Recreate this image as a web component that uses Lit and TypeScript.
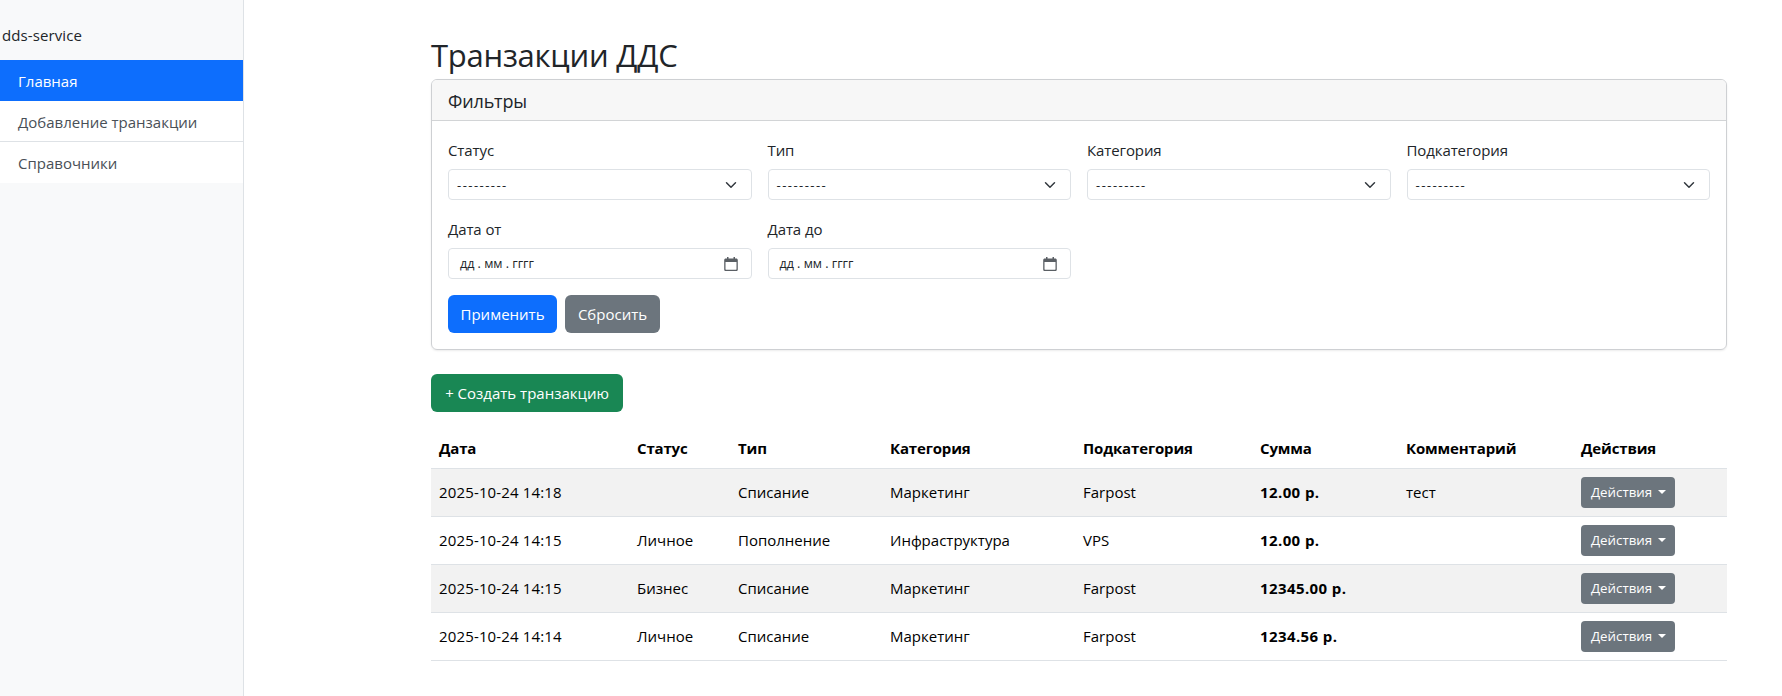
import { LitElement, css, html } from "lit";
import { customElement } from "lit/decorators.js";

const rows = [
  ["2025-10-24 14:18", "", "Списание", "Маркетинг", "Farpost", "12.00 р.", "тест"],
  ["2025-10-24 14:15", "Личное", "Пополнение", "Инфраструктура", "VPS", "12.00 р.", ""],
  ["2025-10-24 14:15", "Бизнес", "Списание", "Маркетинг", "Farpost", "12345.00 р.", ""],
  ["2025-10-24 14:14", "Личное", "Списание", "Маркетинг", "Farpost", "1234.56 р.", ""],
];

const chevron = html`<svg class="chev" viewBox="0 0 16 16" fill="none"><path d="M2 5l6 6 6-6" stroke="#343a40" stroke-width="2" stroke-linecap="round" stroke-linejoin="round"/></svg>`;
const calendar = html`<svg class="cal" viewBox="0 0 14 14"><path d="M3 0h1.5v1.5h5V0H11v1.5h1.2c.9 0 1.6.7 1.6 1.6v9.3c0 .9-.7 1.6-1.6 1.6H1.8C.9 14 .2 13.3.2 12.4V3.1c0-.9.7-1.6 1.6-1.6H3zM1.5 5v7.2c0 .3.2.5.5.5h10c.3 0 .5-.2.5-.5V5z" fill="#5a5f64"/></svg>`;

@customElement("app-root")
export class AppRoot extends LitElement {
  static styles = css`
    :host {
      display: grid;
      grid-template-columns: 244px 1fr;
      min-height: 100vh;
      font-family: "Open Sans", "Noto Sans", sans-serif;
      font-size: 15px;
      color: #212529;
      background: #fff;
    }
    * { box-sizing: border-box; }
    .side {
      background: #f8f9fa;
      border-right: 1px solid #dee2e6;
    }
    .brand {
      height: 60px;
      padding: 24px 0 0 2px;
      line-height: 22px;
      letter-spacing: 0.1px;
    }
    .nav-item {
      display: block;
      height: 41px;
      padding-left: 18px;
      line-height: 42px;
      background: #fff;
      color: #495057;
    }
    .nav-item.active { background: #0d6efd; color: #fff; }
    .nav-item.ruled { border-bottom: 1px solid #dee2e6; }

    main { padding: 32px 55px 0 187px; }
    h1 {
      margin: 0;
      height: 47px;
      font-size: 31px;
      line-height: 46px;
      font-weight: 400;
      letter-spacing: -0.25px;
    }
    .card {
      border: 1px solid #ced0d3;
      border-radius: 6px;
      box-shadow: 0 1px 2px rgba(0, 0, 0, 0.08);
      overflow: hidden;
    }
    .card-head {
      height: 41px;
      padding-left: 16px;
      background: #f7f7f7;
      border-bottom: 1px solid #d2d4d6;
      font-size: 18px;
      line-height: 43px;
      letter-spacing: -0.15px;
    }
    .card-body { padding: 16px; height: 228px; }
    .filters {
      display: grid;
      grid-template-columns: repeat(4, 1fr);
      gap: 16px;
    }
    label {
      display: block;
      height: 24px;
      margin-bottom: 8px;
      line-height: 26px;
      font-size: 15px;
      letter-spacing: -0.1px;
    }
    .control {
      display: flex;
      align-items: center;
      justify-content: space-between;
      height: 31px;
      border: 1px solid #dee2e6;
      border-radius: 4px;
      background: #fff;
      font-size: 13px;
    }
    .select { padding: 0 14px 0 8px; }
    .select span { letter-spacing: 1.45px; }
    .date { padding: 0 13px 0 11px; font-size: 12.5px; }
    .chev { width: 12px; height: 12px; }
    .cal { width: 14px; height: 14px; }
    .buttons { display: flex; gap: 8px; margin-top: 16px; }
    .btn {
      display: inline-flex;
      align-items: center;
      justify-content: center;
      height: 38px;
      border: 0;
      border-radius: 6px;
      color: #fff;
      font: inherit;
    }
    .primary { width: 109px; background: #0d6efd; }
    .secondary { width: 95px; background: #6c757d; }
    .success { width: 192px; background: #198754; margin: 24px 0 16px; }

    table {
      width: 100%;
      border-collapse: collapse;
      table-layout: fixed;
    }
    th, td {
      padding: 0 8px;
      text-align: left;
      white-space: nowrap;
    }
    th { height: 40px; font-weight: 700; color: #000; letter-spacing: -0.15px; }
    td { height: 48px; color: #000; }
    tr { border-bottom: 1px solid #dee2e6; }
    tbody tr:nth-child(odd) { background: #f2f2f2; }
    .when { letter-spacing: 0.15px; }
    .sum { font-weight: 700; letter-spacing: 0.4px; }
    .c1 { width: 198px; }
    .c2 { width: 101px; }
    .c3 { width: 152px; }
    .c4 { width: 193px; }
    .c5 { width: 177px; }
    .c6 { width: 146px; }
    .c7 { width: 175px; }
    .action {
      display: inline-flex;
      align-items: center;
      justify-content: space-between;
      width: 94px;
      height: 31px;
      padding: 0 9px 0 10px;
      border-radius: 4px;
      background: #6c757d;
      color: #fff;
      font-size: 13.3px;
      vertical-align: middle;
    }
    .caret {
      width: 0;
      height: 0;
      border-top: 4px solid #fff;
      border-left: 4px solid transparent;
      border-right: 4px solid transparent;
    }
  `;

  private cellClass(i: number) {
    if (i === 0) return "when";
    return i === 5 ? "sum" : "";
  }

  render() {
    return html`
      <aside class="side">
        <div class="brand">dds-service</div>
        <a class="nav-item active">Главная</a>
        <a class="nav-item ruled">Добавление транзакции</a>
        <a class="nav-item">Справочники</a>
      </aside>
      <main>
        <h1>Транзакции ДДС</h1>
        <section class="card">
          <div class="card-head">Фильтры</div>
          <div class="card-body">
            <div class="filters">
              ${["Статус", "Тип", "Категория", "Подкатегория"].map(
                (name) => html`<div>
                  <label>${name}</label>
                  <div class="control select"><span>---------</span>${chevron}</div>
                </div>`
              )}
              ${["Дата от", "Дата до"].map(
                (name) => html`<div>
                  <label>${name}</label>
                  <div class="control date"><span>дд . мм . гггг</span>${calendar}</div>
                </div>`
              )}
            </div>
            <div class="buttons">
              <button class="btn primary">Применить</button>
              <button class="btn secondary">Сбросить</button>
            </div>
          </div>
        </section>
        <button class="btn success">+ Создать транзакцию</button>
        <table>
          <colgroup>
            <col class="c1" /><col class="c2" /><col class="c3" /><col class="c4" />
            <col class="c5" /><col class="c6" /><col class="c7" /><col />
          </colgroup>
          <thead>
            <tr>
              ${["Дата", "Статус", "Тип", "Категория", "Подкатегория", "Сумма", "Комментарий", "Действия"].map(
                (name) => html`<th>${name}</th>`
              )}
            </tr>
          </thead>
          <tbody>
            ${rows.map(
              (row) => html`<tr>
                ${row.map((cell, i) => html`<td class="${this.cellClass(i)}">${cell}</td>`)}
                <td><span class="action">Действия<i class="caret"></i></span></td>
              </tr>`
            )}
          </tbody>
        </table>
      </main>
    `;
  }
}
